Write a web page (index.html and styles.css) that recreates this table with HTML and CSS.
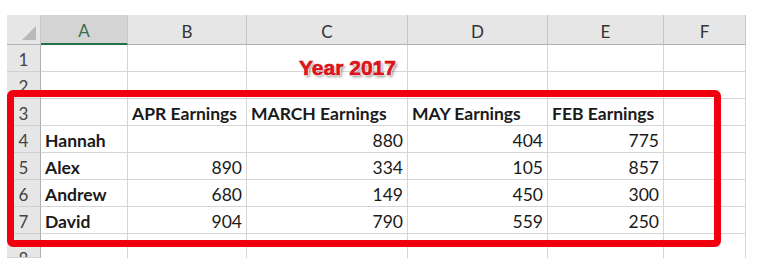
FILE: index.html
```html
<!DOCTYPE html>
<html>
<head>
<meta charset="utf-8">
<link rel="stylesheet" href="styles.css">
</head>
<body>
<div class="sheet">
  <div class="grid">
    <div class="corner"><svg width="34" height="30" viewBox="0 0 34 30"><polygon points="29,11 29,25 15,25" fill="#b9b9b9"/></svg></div>
    <div class="ch sel">A</div>
    <div class="ch">B</div>
    <div class="ch">C</div>
    <div class="ch">D</div>
    <div class="ch">E</div>
    <div class="ch">F</div>

    <div class="rh">1</div><div class="c"></div><div class="c"></div><div class="c"></div><div class="c"></div><div class="c"></div><div class="c"></div>
    <div class="rh">2</div><div class="c"></div><div class="c"></div><div class="c"></div><div class="c"></div><div class="c"></div><div class="c"></div>
    <div class="rh">3</div><div class="c"></div><div class="c b">APR Earnings</div><div class="c b">MARCH Earnings</div><div class="c b">MAY Earnings</div><div class="c b">FEB Earnings</div><div class="c"></div>
    <div class="rh">4</div><div class="c b">Hannah</div><div class="c n"></div><div class="c n">880</div><div class="c n">404</div><div class="c n">775</div><div class="c"></div>
    <div class="rh">5</div><div class="c b">Alex</div><div class="c n">890</div><div class="c n">334</div><div class="c n">105</div><div class="c n">857</div><div class="c"></div>
    <div class="rh">6</div><div class="c b">Andrew</div><div class="c n">680</div><div class="c n">149</div><div class="c n">450</div><div class="c n">300</div><div class="c"></div>
    <div class="rh">7</div><div class="c b">David</div><div class="c n">904</div><div class="c n">790</div><div class="c n">559</div><div class="c n">250</div><div class="c"></div>
    <div class="rh last">8</div><div class="c last"></div><div class="c last"></div><div class="c last"></div><div class="c last"></div><div class="c last"></div><div class="c last"></div>
  </div>
  <div class="title">Year 2017</div>
  <div class="highlight"></div>
</div>
</body>
</html>
```

FILE: styles.css
```css
html, body {
  margin: 0;
  padding: 0;
  background: #fff;
}
body {
  width: 769px;
  height: 279px;
  overflow: hidden;
}
.sheet {
  position: relative;
  margin: 15px 0 0 7px;
  width: 739px;
}
.grid {
  display: grid;
  grid-template-columns: 34px 87px 119px 161px 140px 116px 82px;
  grid-template-rows: 30px repeat(7, 27px) 24px;
  font-family: "Lato", "Open Sans", sans-serif;
  font-size: 17.5px;
  color: #1a1a1a;
}
.grid > div {
  box-sizing: border-box;
  overflow: hidden;
  white-space: nowrap;
}
.corner {
  background: #e6e6e6;
  border-right: 1px solid #c6c6c6;
  border-bottom: 1px solid #b0b0b0;
}
.corner svg { display: block; }
.ch {
  background: #e6e6e6;
  border-right: 1px solid #c6c6c6;
  border-bottom: 1px solid #b0b0b0;
  display: flex;
  align-items: center;
  justify-content: center;
  color: #333;
  font-size: 17px;
  padding-top: 3px;
}
.ch.sel {
  background: #d4d4d4;
  color: #3d6a4e;
  border-bottom: 2px solid #217346;
}
.rh {
  background: #e6e6e6;
  border-right: 1px solid #b0b0b0;
  border-bottom: 1px solid #d0d0d0;
  display: flex;
  align-items: center;
  justify-content: center;
  color: #444;
  font-size: 17px;
  padding-top: 2px;
}
.rh.last {
  align-items: flex-start;
  padding-top: 14px;
}
.c {
  border-right: 1px solid #d6d6d6;
  border-bottom: 1px solid #d6d6d6;
  display: flex;
  align-items: center;
  padding: 3px 4px 0 4px;
  color: #1a1a1a;
}
.c.last { border-bottom: none; }
.c.b { font-weight: 700; }
.c.n { justify-content: flex-end; }
.title {
  position: absolute;
  left: 292px;
  top: 41px;
  font-family: "Liberation Sans", Arial, sans-serif;
  font-weight: 700;
  font-size: 21px;
  color: #e5141b;
  -webkit-text-stroke: 0.6px #c40f15;
  text-shadow: 1px 0 0 #fff, -1px 0 0 #fff, 0 1px 0 #fff, 0 -1px 0 #fff, 2px 2px 3px rgba(0,0,0,0.45);
}
.highlight {
  position: absolute;
  left: 0;
  top: 75px;
  width: 714px;
  height: 157px;
  box-sizing: border-box;
  border: 7px solid #f0000f;
  border-radius: 6px;
}
```
